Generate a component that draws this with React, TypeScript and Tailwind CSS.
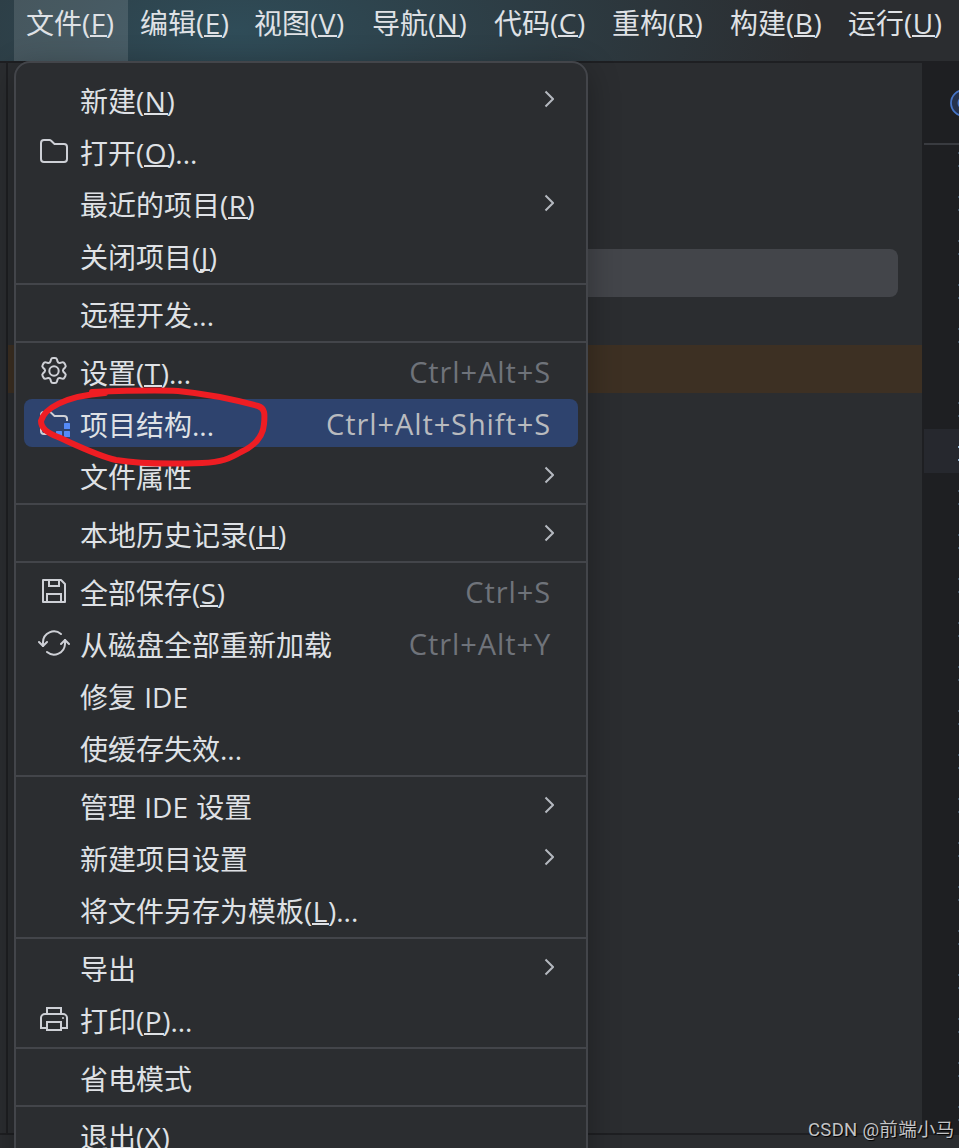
import React from "react";

interface MenuEntry {
  label: string;
  mnemonic?: string;
  suffix?: string;
  icon?: React.ReactNode;
  submenu?: boolean;
  shortcut?: string;
  selected?: boolean;
}

const FolderIcon = () => (
  <svg width="32" height="32" viewBox="0 0 32 32" fill="none" stroke="#ced0d6" strokeWidth="2">
    <path d="M3 8a3 3 0 0 1 3-3h5.500a2 2 0 0 1 1.400.600L16.500 9H26a3 3 0 0 1 3 3V24a3 3 0 0 1-3 3H6a3 3 0 0 1-3-3Z" />
  </svg>
);

const GearIcon = () => (
  <svg width="32" height="32" viewBox="0 0 32 32" fill="none" stroke="#ced0d6" strokeWidth="2" strokeLinejoin="round">
    <circle cx="16" cy="16" r="4.700" />
    <path d="M13 4.500Q13.400 3 15 3h2q1.600 0 2 1.500l.600 2.200q.600 1.500 2.200 1.300l2.300-.600q1.600-.400 2.300.900l1 1.800q.800 1.300-.300 2.400l-1.700 1.700q-1 1.300 0 2.600l1.700 1.700q1.100 1.100.300 2.400l-1 1.800q-.700 1.300-2.300.900l-2.300-.600q-1.600-.200-2.200 1.300l-.600 2.200q-.400 1.500-2 1.500h-2q-1.600 0-2-1.500l-.600-2.200q-.600-1.500-2.200-1.300l-2.300.600q-1.600.400-2.300-.900l-1-1.800q-.800-1.300.300-2.400l1.700-1.700q1-1.300 0-2.600l-1.700-1.700q-1.100-1.100-.300-2.400l1-1.800q.700-1.300 2.300-.900l2.300.600q1.600.200 2.200-1.300Z" />
  </svg>
);

const StructureIcon = () => (
  <svg width="32" height="32" viewBox="0 0 32 32" fill="none" stroke="#ced0d6" strokeWidth="2">
    <path d="M29 14v-2a3 3 0 0 0-3-3h-9.500L13 5.600A2 2 0 0 0 11.500 5H6a3 3 0 0 0-3 3v16a3 3 0 0 0 3 3h10" />
    <g fill="#548af7" stroke="none">
      <rect x="26" y="16" width="6" height="6" rx="0.500" />
      <rect x="18" y="24" width="6" height="6" rx="0.500" />
      <rect x="26" y="24" width="6" height="6" rx="0.500" />
    </g>
  </svg>
);

const SaveIcon = () => (
  <svg width="32" height="32" viewBox="0 0 32 32" fill="none" stroke="#ced0d6" strokeWidth="2">
    <path d="M5 5h18l4 4v18H5Z" strokeLinejoin="round" />
    <path d="M11 5v6h10V5M9 27v-8h14v8" />
  </svg>
);

const ReloadIcon = () => (
  <svg width="32" height="32" viewBox="0 0 32 32" fill="none" stroke="#ced0d6" strokeWidth="2" strokeLinecap="round" strokeLinejoin="round">
    <path d="M23 7A11 11 0 0 0 5 15v4M9 25a11 11 0 0 0 18-8v-4" />
    <path d="M1 15l4 4 4-4M23 17l4-4 4 4" />
  </svg>
);

const PrintIcon = () => (
  <svg width="32" height="32" viewBox="0 0 32 32" fill="none" stroke="#ced0d6" strokeWidth="2">
    <path d="M9 11V5h14v6M9 25H3V15a4 4 0 0 1 4-4h18a4 4 0 0 1 4 4v10h-6" />
    <rect x="9" y="19" width="14" height="8" />
    <circle cx="25" cy="15" r="1" fill="#ced0d6" stroke="none" />
  </svg>
);

const Chevron = () => (
  <svg width="10" height="18" viewBox="0 0 10 18" fill="none" stroke="#b4b8bf" strokeWidth="2">
    <path d="M1.500 1.500 9 9 1.500 16.500" />
  </svg>
);

const menuBar = [
  { label: "文件", mnemonic: "F", width: "w-[114px]" },
  { label: "编辑", mnemonic: "E", width: "w-[114px]" },
  { label: "视图", mnemonic: "V", width: "w-[118px]" },
  { label: "导航", mnemonic: "N", width: "w-[122px]" },
  { label: "代码", mnemonic: "C", width: "w-[118px]" },
  { label: "重构", mnemonic: "R", width: "w-[118px]" },
  { label: "构建", mnemonic: "B", width: "w-[118px]" },
  { label: "运行", mnemonic: "U", width: "w-[123px]" },
];

const groups: MenuEntry[][] = [
  [
    { label: "新建", mnemonic: "N", submenu: true },
    { label: "打开", mnemonic: "O", suffix: "...", icon: <FolderIcon /> },
    { label: "最近的项目", mnemonic: "R", submenu: true },
    { label: "关闭项目", mnemonic: "J" },
  ],
  [{ label: "远程开发..." }],
  [
    { label: "设置", mnemonic: "T", suffix: "...", icon: <GearIcon />, shortcut: "Ctrl+Alt+S" },
    { label: "项目结构...", icon: <StructureIcon />, shortcut: "Ctrl+Alt+Shift+S", selected: true },
    { label: "文件属性", submenu: true },
  ],
  [{ label: "本地历史记录", mnemonic: "H", submenu: true }],
  [
    { label: "全部保存", mnemonic: "S", icon: <SaveIcon />, shortcut: "Ctrl+S" },
    { label: "从磁盘全部重新加载", icon: <ReloadIcon />, shortcut: "Ctrl+Alt+Y" },
    { label: "修复 IDE" },
    { label: "使缓存失效..." },
  ],
  [
    { label: "管理 IDE 设置", submenu: true },
    { label: "新建项目设置", submenu: true },
    { label: "将文件另存为模板", mnemonic: "L", suffix: "..." },
  ],
  [
    { label: "导出", submenu: true },
    { label: "打印", mnemonic: "P", suffix: "...", icon: <PrintIcon /> },
  ],
  [{ label: "省电模式" }],
  [{ label: "退出", mnemonic: "X" }],
];

const Label = ({ label, mnemonic, suffix }: { label: string; mnemonic?: string; suffix?: string }) => (
  <span className="whitespace-pre [word-spacing:1px]">
    {label}
    {mnemonic && (
      <>
        (
        <span className="relative mx-[0.5px]">
          {mnemonic}
          <span className="absolute -left-[1px] -right-[2px] bottom-[5px] h-[2px] bg-[#dfe1e5]" />
        </span>
        )
      </>
    )}
    {suffix}
  </span>
);

const MenuRow = ({ icon, submenu, shortcut, selected, ...text }: MenuEntry) => (
  <div
    className={`flex items-center h-12 my-[2px] mx-2 pl-[14px] rounded-lg ${
      selected ? "bg-[#2e436e]" : ""
    }`}
  >
    <div className="w-8 h-8 mr-[10px] shrink-0">{icon}</div>
    <div className="leading-[48px] pt-1">
      <Label {...text} />
    </div>
    {shortcut && (
      <div
        className={`ml-auto mr-[27px] pt-[1px] text-[29px] whitespace-nowrap tracking-[0.9px] ${
          selected ? "text-[#b9bbbf]" : "text-[#6f737a]"
        }`}
      >
        {shortcut}
      </div>
    )}
    {submenu && (
      <div className="ml-auto mr-6">
        <Chevron />
      </div>
    )}
  </div>
);

const FileMenu = () => (
  <div className="absolute left-[14px] top-[61px] w-[574px] h-[1120px] pt-[10px] rounded-t-2xl border-2 border-[#43454a] bg-[#2b2d30] shadow-[0_8px_32px_rgba(0,0,0,0.3)]">
    {groups.map((group, i) => (
      <div key={i} className="flex flex-col">
        {i > 0 && <div className="h-[2px] my-[2px] bg-[#43454a]" />}
        {group.map((entry) => (
          <MenuRow key={entry.label} {...entry} />
        ))}
      </div>
    ))}
  </div>
);

// One editor line; only the edge of its line number is in view
const GutterLine = ({ current }: { current?: boolean }) => (
  <div
    className={`flex flex-col items-end h-11 pt-[17px] gap-[11px] shrink-0 ${
      current ? "bg-[#26282e]" : ""
    }`}
  >
    <div className={`w-px h-[2px] ${current ? "bg-[#8fb0cc]" : "bg-[#3d4f60]"}`} />
    <div className={`w-px h-[2px] ${current ? "bg-[#8fb0cc]" : "bg-[#3d4f60]"}`} />
  </div>
);

const Editor = () => (
  <div className="ml-[2px] flex-1 flex flex-col overflow-hidden">
    <div className="h-20 pt-[26px] pl-[26px] shrink-0">
      <svg width="28" height="28" viewBox="0 0 28 28" fill="none">
        <circle cx="14" cy="14" r="13" fill="#25324d" stroke="#4674c6" strokeWidth="1.800" />
        <circle cx="14" cy="14" r="5.500" stroke="#4674c6" strokeWidth="2" />
      </svg>
    </div>
    <div className="h-[2px] shrink-0 bg-[#393b40]" />
    <div className="-mt-[10px] shrink-0">
      {Array.from({ length: 5 }, (_, i) => (
        <GutterLine key={i} />
      ))}
    </div>
    <div className="mt-[30px]">
      <GutterLine />
      <GutterLine current />
      {Array.from({ length: 15 }, (_, i) => (
        <GutterLine key={i} />
      ))}
    </div>
  </div>
);

const App = () => {
  return (
    <div className="relative w-[959px] h-[1148px] overflow-hidden flex flex-col bg-[#1e1f22] text-[#dfe1e5] text-[28px] font-['Open_Sans','Noto_Sans_CJK_SC',sans-serif]">
      {/* Menu bar */}
      <div className="flex h-[61px] shrink-0 pl-[14px] bg-[#2b2d30] bg-[radial-gradient(ellipse_580px_230px_at_235px_30px,#2f4c58,#2b2d30)]">
        {menuBar.map((item, i) => (
          <div
            key={item.label}
            className={`shrink-0 h-full pl-3 leading-[46px] ${item.width} ${i === 0 ? "bg-white/12" : ""}`}
          >
            <Label label={item.label} mnemonic={item.mnemonic} />
          </div>
        ))}
      </div>

      {/* Tool window and editor */}
      <div className="flex mt-[2px] h-[1070px] shrink-0">
        <div className="w-[6px] bg-[#2b2d30]" />
        <div className="ml-[2px] w-[914px] bg-[#2b2d30]">
          <div className="mt-[186px] ml-6 mr-6 h-12 rounded-lg bg-[#43454a]" />
          <div className="mt-12 h-12 bg-[#3d3023]" />
        </div>
        <Editor />
      </div>

      {/* Status bar */}
      <div className="mt-[2px] flex-1 bg-[#2b2d30]" />

      <FileMenu />

      {/* Hand-drawn marker around the selected entry */}
      <svg className="absolute left-0 top-[370px]" width="300" height="110" viewBox="0 370 300 110" fill="none">
        <path
          d="M92 392C118 391 158 390 178 391C208 394 240 401 258 406C265 408 265 414 264 424C263 438 254 446 241 452C229 459 222 462 202 463C175 464 140 464 116 460C98 456 78 446 58 437C47 433 41 428 41 421C44 409 64 396 105 393"
          stroke="#ee1d23"
          strokeWidth="6"
          strokeLinecap="round"
          strokeLinejoin="round"
        />
      </svg>

      <div className="absolute left-[808px] top-[1118px] text-[18.5px] leading-6 whitespace-nowrap tracking-[0.3px] text-[#c3c4c6] font-['Roboto','Noto_Sans_CJK_SC',sans-serif] [text-shadow:1px_1px_1px_#000]">
        CSDN @前端小马
      </div>
    </div>
  );
};

export default App;
